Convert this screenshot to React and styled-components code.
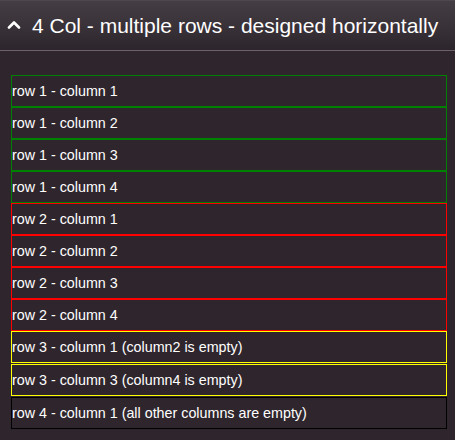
import styled, { createGlobalStyle } from "styled-components";

const GlobalStyle = createGlobalStyle`
  html, body {
    margin: 0;
    padding: 0;
    background: #2f262d;
  }
  body {
    font-family: "Liberation Sans", Arial, sans-serif;
  }
`;

const cells = [
  { text: "row 1 - column 1", color: "green" },
  { text: "row 1 - column 2", color: "green" },
  { text: "row 1 - column 3", color: "green" },
  { text: "row 1 - column 4", color: "green" },
  { text: "row 2 - column 1", color: "red" },
  { text: "row 2 - column 2", color: "red" },
  { text: "row 2 - column 3", color: "red" },
  { text: "row 2 - column 4", color: "red" },
  { text: "row 3 - column 1 (column2 is empty)", color: "yellow", gap: true },
  { text: "row 3 - column 3 (column4 is empty)", color: "yellow", gap: true },
  { text: "row 4 - column 1 (all other columns are empty)", color: "black" },
];

const App = () => {
  return (
    <Page>
      <GlobalStyle />
      <Header>
        <Chevron width="14" height="9" viewBox="0 0 14 9">
          <polyline points="2,7.5 7,2.5 12,7.5" />
        </Chevron>
        <Title>4 Col - multiple rows - designed horizontally</Title>
      </Header>
      <Content>
        <Grid>
          {cells.map((cell) => (
            <Cell key={cell.text} $color={cell.color} $gap={cell.gap}>
              {cell.text}
            </Cell>
          ))}
        </Grid>
      </Content>
    </Page>
  );
};

export default App;

const Page = styled.div`
  width: 455px;
  min-height: 440px;
  background: #2f262d;
`;

const Header = styled.div`
  display: flex;
  align-items: center;
  gap: 11px;
  height: 49px;
  padding-left: 7px;
  border-top: 1px solid #4f474e;
  border-bottom: 1px solid #6e5f6c;
  background: linear-gradient(to bottom, #443d44 0%, #3a3239 50%, #2d252c 100%);
`;

const Chevron = styled.svg`
  flex-shrink: 0;
  margin-top: -2px;

  polyline {
    fill: none;
    stroke: #ffffff;
    stroke-width: 2.6;
    stroke-linecap: round;
    stroke-linejoin: round;
  }
`;

const Title = styled.h2`
  margin: 0;
  font-size: 21px;
  font-weight: 400;
  color: #ffffff;
  white-space: nowrap;
`;

const Content = styled.div`
  padding: 24px 8px 0 11px;
`;

const Grid = styled.div`
  display: flex;
  flex-direction: column;
`;

const Cell = styled.div`
  box-sizing: border-box;
  display: flex;
  align-items: center;
  height: 32px;
  margin-bottom: ${(p) => (p.$gap ? "1px" : "0")};
  border: 1px solid ${(p) => p.$color};
  font-size: 14.3px;
  color: #ffffff;
`;
